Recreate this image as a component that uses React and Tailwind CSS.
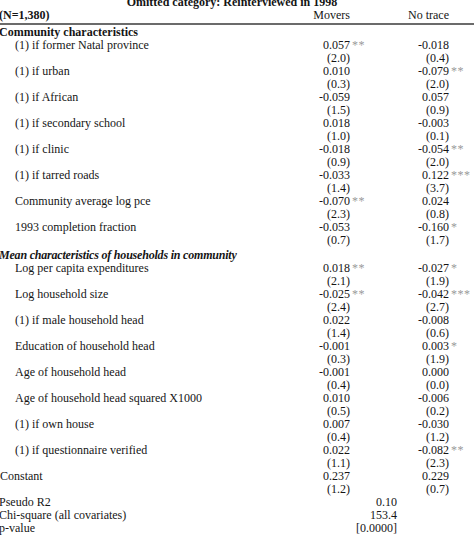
import React from "react";

const rows = [
  { type: "head", label: "Community characteristics" },
  { label: "(1) if former Natal province", a: "0.057", as: "**", at: "(2.0)", b: "-0.018", bt: "(0.4)" },
  { label: "(1) if urban", a: "0.010", at: "(0.3)", b: "-0.079", bs: "**", bt: "(2.0)" },
  { label: "(1) if African", a: "-0.059", at: "(1.5)", b: "0.057", bt: "(0.9)" },
  { label: "(1) if secondary school", a: "0.018", at: "(1.0)", b: "-0.003", bt: "(0.1)" },
  { label: "(1) if clinic", a: "-0.018", at: "(0.9)", b: "-0.054", bs: "**", bt: "(2.0)" },
  { label: "(1) if tarred roads", a: "-0.033", at: "(1.4)", b: "0.122", bs: "***", bt: "(3.7)" },
  { label: "Community average log pce", a: "-0.070", as: "**", at: "(2.3)", b: "0.024", bt: "(0.8)" },
  { label: "1993 completion fraction", a: "-0.053", at: "(0.7)", b: "-0.160", bs: "*", bt: "(1.7)" },
  { type: "head2", label: "Mean characteristics of households in community" },
  { label: "Log per capita expenditures", a: "0.018", as: "**", at: "(2.1)", b: "-0.027", bs: "*", bt: "(1.9)" },
  { label: "Log household size", a: "-0.025", as: "**", at: "(2.4)", b: "-0.042", bs: "***", bt: "(2.7)" },
  { label: "(1) if male household head", a: "0.022", at: "(1.4)", b: "-0.008", bt: "(0.6)" },
  { label: "Education of household head", a: "-0.001", at: "(0.3)", b: "0.003", bs: "*", bt: "(1.9)" },
  { label: "Age of household head", a: "-0.001", at: "(0.4)", b: "0.000", bt: "(0.0)" },
  { label: "Age of household head squared X1000", a: "0.010", at: "(0.5)", b: "-0.006", bt: "(0.2)" },
  { label: "(1) if own house", a: "0.007", at: "(0.4)", b: "-0.030", bt: "(1.2)" },
  { label: "(1) if questionnaire verified", a: "0.022", at: "(1.1)", b: "-0.082", bs: "**", bt: "(2.3)" },
  { label: "Constant", flush: true, a: "0.237", at: "(1.2)", b: "0.229", bt: "(0.7)" },
];

const stats = [
  ["Pseudo R2", "0.10"],
  ["Chi-square (all covariates)", "153.4"],
  ["p-value", "[0.0000]"],
];

const Stars = ({ s }) => (
  <div className="pl-[2px] text-[#999] text-[12px] leading-[13px] tracking-[0.5px]">{s || ""}</div>
);

const App = () => {
  return (
    <div
      className="w-[474px] h-[535px] overflow-hidden bg-white text-[#151515] text-[12px] leading-[13px]"
      style={{ fontFamily: '"Liberation Serif", "Times New Roman", serif' }}
    >
      <div className="mt-[-4px] pr-[10px] text-center font-bold">
        Omitted category: Reinterviewed in 1998
      </div>
      <div className="grid grid-cols-[300px_50px_25px_74px_25px] pb-[1px]">
        <div className="font-bold ml-[-1px]">(N=1,380)</div>
        <div className="text-right">Movers</div>
        <div></div>
        <div className="text-right">No trace</div>
        <div></div>
      </div>
      <div className="h-[2px] bg-[#6b6b6b]"></div>
      <div className="grid grid-cols-[300px_50px_25px_74px_25px] pt-[1px]">
        {rows.map((r, i) => {
          if (r.type === "head") {
            return (
              <div key={i} className="col-span-5 font-bold ml-[-1px]">
                {r.label}
              </div>
            );
          }
          if (r.type === "head2") {
            return (
              <div key={i} className="col-span-5 font-bold italic ml-[-1px] mt-[2px] tracking-[-0.2px]">
                {r.label}
              </div>
            );
          }
          return (
            <React.Fragment key={i}>
              <div className={r.flush ? "" : "pl-[15px]"}>{r.label}</div>
              <div className="text-right">{r.a}</div>
              <Stars s={r.as} />
              <div className="text-right">{r.b}</div>
              <Stars s={r.bs} />
              <div></div>
              <div className="text-right">{r.at}</div>
              <div></div>
              <div className="text-right">{r.bt}</div>
              <div></div>
            </React.Fragment>
          );
        })}
        {stats.map(([l, v], i) => (
          <React.Fragment key={"s" + i}>
            <div className="ml-[-1px]">{l}</div>
            <div className="col-span-3 text-right pr-[52px]">{v}</div>
            <div></div>
          </React.Fragment>
        ))}
      </div>
    </div>
  );
};

export default App;
